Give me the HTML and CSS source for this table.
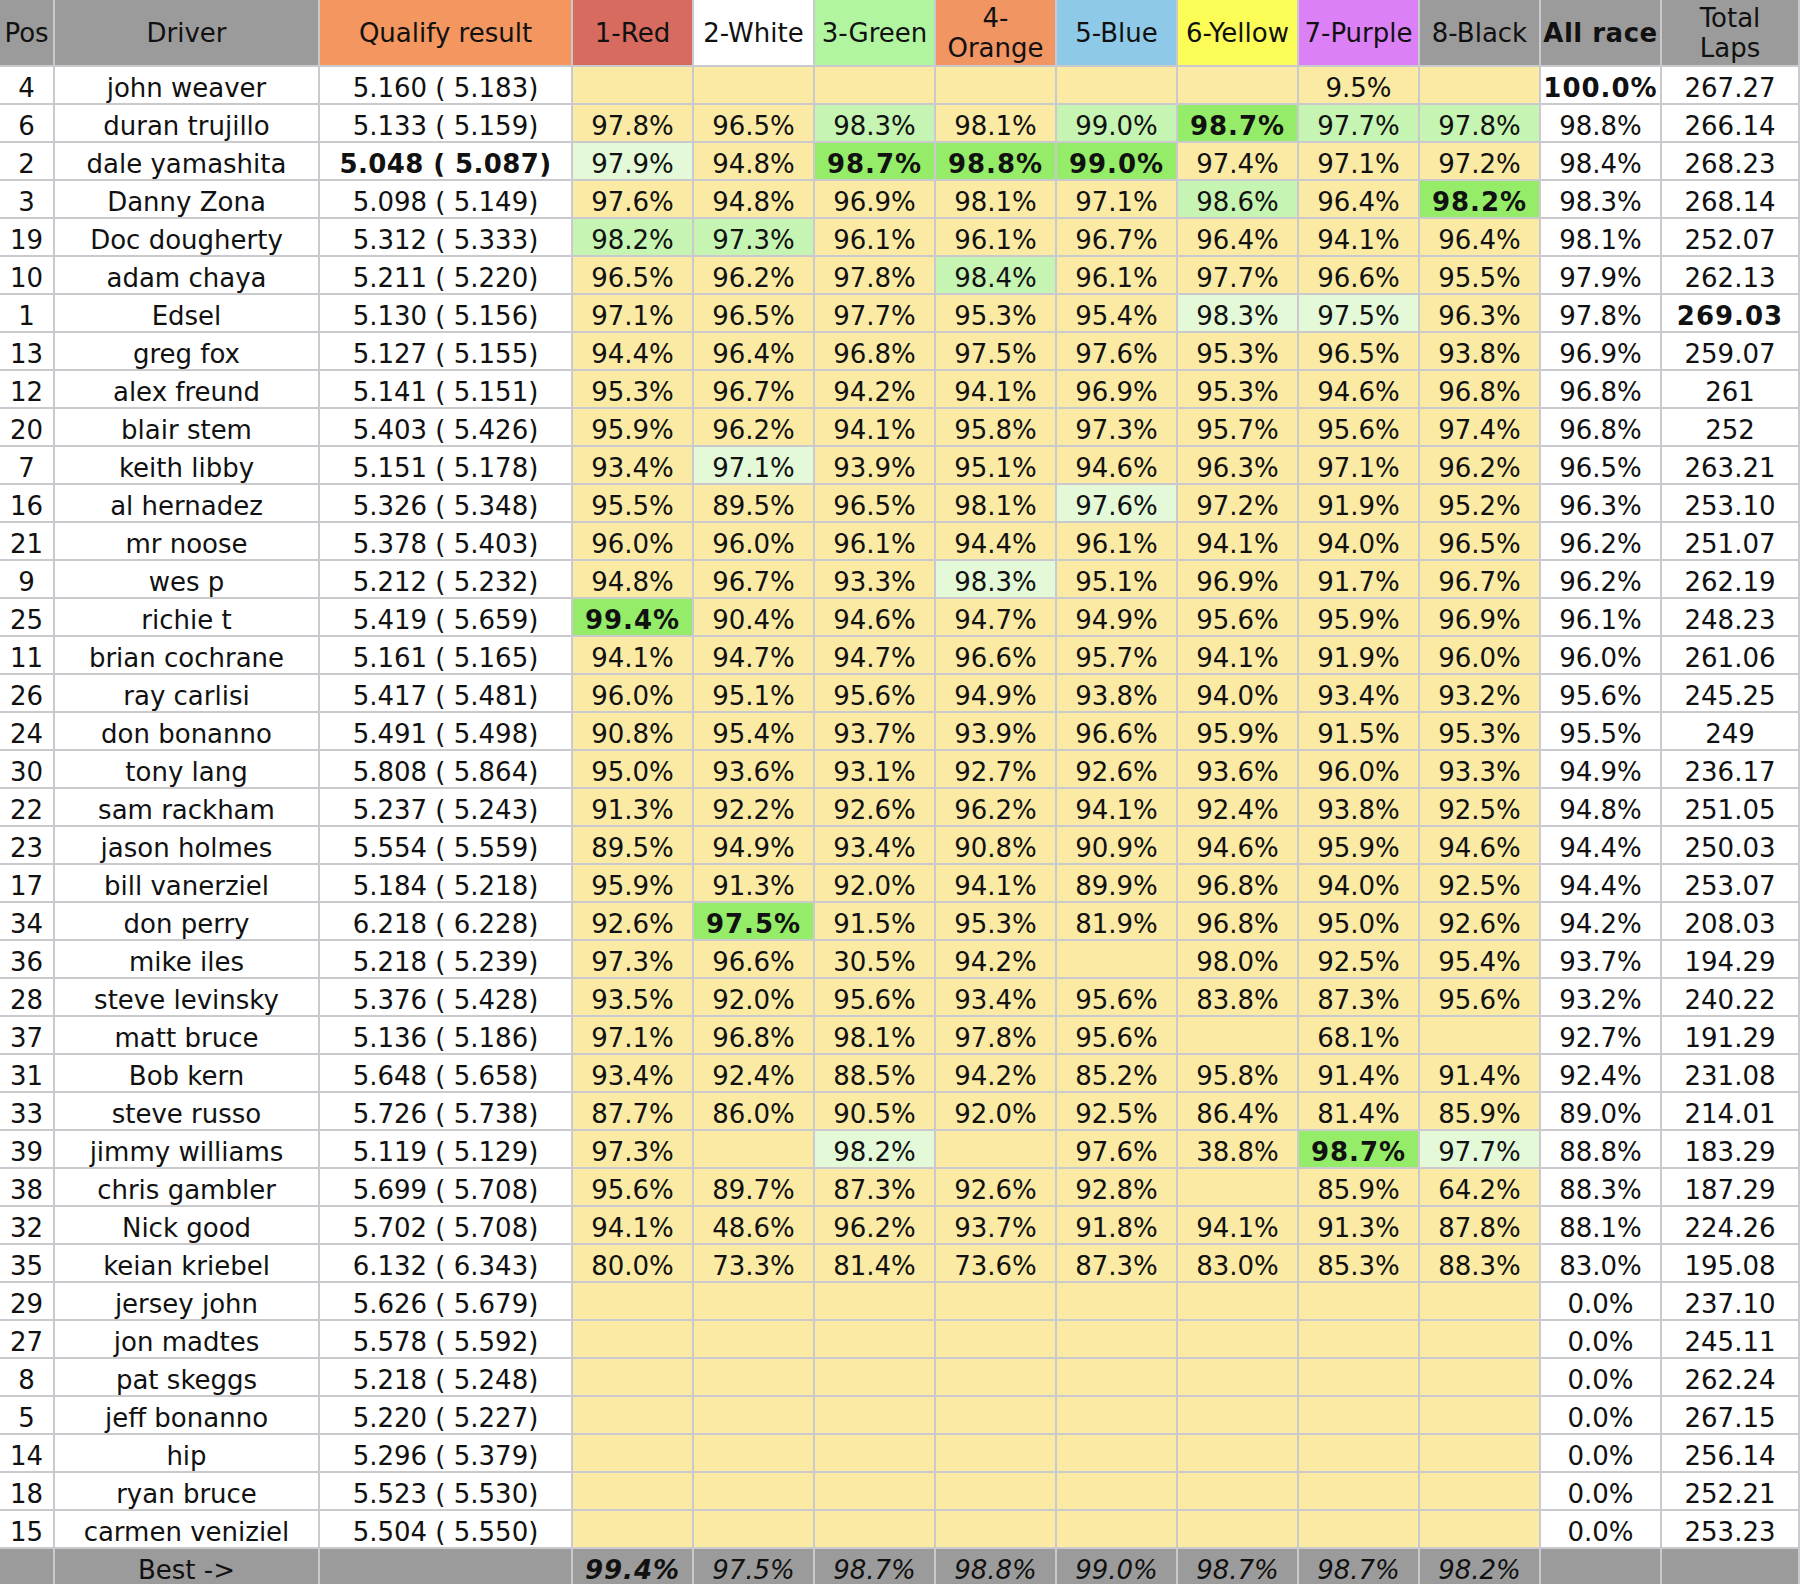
FILE: index.html
```html
<!DOCTYPE html>
<html lang="en">
<head>
<meta charset="utf-8">
<title>Race results</title>
<link rel="stylesheet" href="styles.css">
</head>
<body>
<table class="results">
<colgroup>
<col class="w-pos"><col class="w-driver"><col class="w-qual">
<col class="w-lane"><col class="w-lane"><col class="w-lane"><col class="w-lane">
<col class="w-lane"><col class="w-lane"><col class="w-lane"><col class="w-lane">
<col class="w-lane"><col class="w-total">
</colgroup>
<thead>
<tr>
<th class="h-grey">Pos</th>
<th class="h-grey">Driver</th>
<th class="h-qual">Qualify result</th>
<th class="h-red">1-Red</th>
<th class="h-white">2-White</th>
<th class="h-green">3-Green</th>
<th class="h-orange">4-<br>Orange</th>
<th class="h-blue">5-Blue</th>
<th class="h-yellow">6-Yellow</th>
<th class="h-purple">7-Purple</th>
<th class="h-grey">8-Black</th>
<th class="h-grey bold">All race</th>
<th class="h-grey">Total<br>Laps</th>
</tr>
</thead>
<tbody>
<tr><td>4</td><td>john weaver</td><td>5.160 ( 5.183)</td><td class="c"></td><td class="c"></td><td class="c"></td><td class="c"></td><td class="c"></td><td class="c"></td><td class="c">9.5%</td><td class="c"></td><td class="bold">100.0%</td><td>267.27</td></tr>
<tr><td>6</td><td>duran trujillo</td><td>5.133 ( 5.159)</td><td class="c">97.8%</td><td class="c">96.5%</td><td class="c g2">98.3%</td><td class="c">98.1%</td><td class="c g2">99.0%</td><td class="c g1">98.7%</td><td class="c g2">97.7%</td><td class="c g2">97.8%</td><td>98.8%</td><td>266.14</td></tr>
<tr><td>2</td><td>dale yamashita</td><td class="bold tight">5.048 ( 5.087)</td><td class="c g3">97.9%</td><td class="c">94.8%</td><td class="c g1">98.7%</td><td class="c g1">98.8%</td><td class="c g1">99.0%</td><td class="c">97.4%</td><td class="c">97.1%</td><td class="c">97.2%</td><td>98.4%</td><td>268.23</td></tr>
<tr><td>3</td><td>Danny Zona</td><td>5.098 ( 5.149)</td><td class="c">97.6%</td><td class="c">94.8%</td><td class="c">96.9%</td><td class="c">98.1%</td><td class="c">97.1%</td><td class="c g2">98.6%</td><td class="c">96.4%</td><td class="c g1">98.2%</td><td>98.3%</td><td>268.14</td></tr>
<tr><td>19</td><td>Doc dougherty</td><td>5.312 ( 5.333)</td><td class="c g2">98.2%</td><td class="c g2">97.3%</td><td class="c">96.1%</td><td class="c">96.1%</td><td class="c">96.7%</td><td class="c">96.4%</td><td class="c">94.1%</td><td class="c">96.4%</td><td>98.1%</td><td>252.07</td></tr>
<tr><td>10</td><td>adam chaya</td><td>5.211 ( 5.220)</td><td class="c">96.5%</td><td class="c">96.2%</td><td class="c">97.8%</td><td class="c g2">98.4%</td><td class="c">96.1%</td><td class="c">97.7%</td><td class="c">96.6%</td><td class="c">95.5%</td><td>97.9%</td><td>262.13</td></tr>
<tr><td>1</td><td>Edsel</td><td>5.130 ( 5.156)</td><td class="c">97.1%</td><td class="c">96.5%</td><td class="c">97.7%</td><td class="c">95.3%</td><td class="c">95.4%</td><td class="c g3">98.3%</td><td class="c g3">97.5%</td><td class="c">96.3%</td><td>97.8%</td><td class="bold">269.03</td></tr>
<tr><td>13</td><td>greg fox</td><td>5.127 ( 5.155)</td><td class="c">94.4%</td><td class="c">96.4%</td><td class="c">96.8%</td><td class="c">97.5%</td><td class="c">97.6%</td><td class="c">95.3%</td><td class="c">96.5%</td><td class="c">93.8%</td><td>96.9%</td><td>259.07</td></tr>
<tr><td>12</td><td>alex freund</td><td>5.141 ( 5.151)</td><td class="c">95.3%</td><td class="c">96.7%</td><td class="c">94.2%</td><td class="c">94.1%</td><td class="c">96.9%</td><td class="c">95.3%</td><td class="c">94.6%</td><td class="c">96.8%</td><td>96.8%</td><td>261</td></tr>
<tr><td>20</td><td>blair stem</td><td>5.403 ( 5.426)</td><td class="c">95.9%</td><td class="c">96.2%</td><td class="c">94.1%</td><td class="c">95.8%</td><td class="c">97.3%</td><td class="c">95.7%</td><td class="c">95.6%</td><td class="c">97.4%</td><td>96.8%</td><td>252</td></tr>
<tr><td>7</td><td>keith libby</td><td>5.151 ( 5.178)</td><td class="c">93.4%</td><td class="c g3">97.1%</td><td class="c">93.9%</td><td class="c">95.1%</td><td class="c">94.6%</td><td class="c">96.3%</td><td class="c">97.1%</td><td class="c">96.2%</td><td>96.5%</td><td>263.21</td></tr>
<tr><td>16</td><td>al hernadez</td><td>5.326 ( 5.348)</td><td class="c">95.5%</td><td class="c">89.5%</td><td class="c">96.5%</td><td class="c">98.1%</td><td class="c g3">97.6%</td><td class="c">97.2%</td><td class="c">91.9%</td><td class="c">95.2%</td><td>96.3%</td><td>253.10</td></tr>
<tr><td>21</td><td>mr noose</td><td>5.378 ( 5.403)</td><td class="c">96.0%</td><td class="c">96.0%</td><td class="c">96.1%</td><td class="c">94.4%</td><td class="c">96.1%</td><td class="c">94.1%</td><td class="c">94.0%</td><td class="c">96.5%</td><td>96.2%</td><td>251.07</td></tr>
<tr><td>9</td><td>wes p</td><td>5.212 ( 5.232)</td><td class="c">94.8%</td><td class="c">96.7%</td><td class="c">93.3%</td><td class="c g3">98.3%</td><td class="c">95.1%</td><td class="c">96.9%</td><td class="c">91.7%</td><td class="c">96.7%</td><td>96.2%</td><td>262.19</td></tr>
<tr><td>25</td><td>richie t</td><td>5.419 ( 5.659)</td><td class="c g1">99.4%</td><td class="c">90.4%</td><td class="c">94.6%</td><td class="c">94.7%</td><td class="c">94.9%</td><td class="c">95.6%</td><td class="c">95.9%</td><td class="c">96.9%</td><td>96.1%</td><td>248.23</td></tr>
<tr><td>11</td><td>brian cochrane</td><td>5.161 ( 5.165)</td><td class="c">94.1%</td><td class="c">94.7%</td><td class="c">94.7%</td><td class="c">96.6%</td><td class="c">95.7%</td><td class="c">94.1%</td><td class="c">91.9%</td><td class="c">96.0%</td><td>96.0%</td><td>261.06</td></tr>
<tr><td>26</td><td>ray carlisi</td><td>5.417 ( 5.481)</td><td class="c">96.0%</td><td class="c">95.1%</td><td class="c">95.6%</td><td class="c">94.9%</td><td class="c">93.8%</td><td class="c">94.0%</td><td class="c">93.4%</td><td class="c">93.2%</td><td>95.6%</td><td>245.25</td></tr>
<tr><td>24</td><td>don bonanno</td><td>5.491 ( 5.498)</td><td class="c">90.8%</td><td class="c">95.4%</td><td class="c">93.7%</td><td class="c">93.9%</td><td class="c">96.6%</td><td class="c">95.9%</td><td class="c">91.5%</td><td class="c">95.3%</td><td>95.5%</td><td>249</td></tr>
<tr><td>30</td><td>tony lang</td><td>5.808 ( 5.864)</td><td class="c">95.0%</td><td class="c">93.6%</td><td class="c">93.1%</td><td class="c">92.7%</td><td class="c">92.6%</td><td class="c">93.6%</td><td class="c">96.0%</td><td class="c">93.3%</td><td>94.9%</td><td>236.17</td></tr>
<tr><td>22</td><td>sam rackham</td><td>5.237 ( 5.243)</td><td class="c">91.3%</td><td class="c">92.2%</td><td class="c">92.6%</td><td class="c">96.2%</td><td class="c">94.1%</td><td class="c">92.4%</td><td class="c">93.8%</td><td class="c">92.5%</td><td>94.8%</td><td>251.05</td></tr>
<tr><td>23</td><td>jason holmes</td><td>5.554 ( 5.559)</td><td class="c">89.5%</td><td class="c">94.9%</td><td class="c">93.4%</td><td class="c">90.8%</td><td class="c">90.9%</td><td class="c">94.6%</td><td class="c">95.9%</td><td class="c">94.6%</td><td>94.4%</td><td>250.03</td></tr>
<tr><td>17</td><td>bill vanerziel</td><td>5.184 ( 5.218)</td><td class="c">95.9%</td><td class="c">91.3%</td><td class="c">92.0%</td><td class="c">94.1%</td><td class="c">89.9%</td><td class="c">96.8%</td><td class="c">94.0%</td><td class="c">92.5%</td><td>94.4%</td><td>253.07</td></tr>
<tr><td>34</td><td>don perry</td><td>6.218 ( 6.228)</td><td class="c">92.6%</td><td class="c g1">97.5%</td><td class="c">91.5%</td><td class="c">95.3%</td><td class="c">81.9%</td><td class="c">96.8%</td><td class="c">95.0%</td><td class="c">92.6%</td><td>94.2%</td><td>208.03</td></tr>
<tr><td>36</td><td>mike iles</td><td>5.218 ( 5.239)</td><td class="c">97.3%</td><td class="c">96.6%</td><td class="c">30.5%</td><td class="c">94.2%</td><td class="c"></td><td class="c">98.0%</td><td class="c">92.5%</td><td class="c">95.4%</td><td>93.7%</td><td>194.29</td></tr>
<tr><td>28</td><td>steve levinsky</td><td>5.376 ( 5.428)</td><td class="c">93.5%</td><td class="c">92.0%</td><td class="c">95.6%</td><td class="c">93.4%</td><td class="c">95.6%</td><td class="c">83.8%</td><td class="c">87.3%</td><td class="c">95.6%</td><td>93.2%</td><td>240.22</td></tr>
<tr><td>37</td><td>matt bruce</td><td>5.136 ( 5.186)</td><td class="c">97.1%</td><td class="c">96.8%</td><td class="c">98.1%</td><td class="c">97.8%</td><td class="c">95.6%</td><td class="c"></td><td class="c">68.1%</td><td class="c"></td><td>92.7%</td><td>191.29</td></tr>
<tr><td>31</td><td>Bob kern</td><td>5.648 ( 5.658)</td><td class="c">93.4%</td><td class="c">92.4%</td><td class="c">88.5%</td><td class="c">94.2%</td><td class="c">85.2%</td><td class="c">95.8%</td><td class="c">91.4%</td><td class="c">91.4%</td><td>92.4%</td><td>231.08</td></tr>
<tr><td>33</td><td>steve russo</td><td>5.726 ( 5.738)</td><td class="c">87.7%</td><td class="c">86.0%</td><td class="c">90.5%</td><td class="c">92.0%</td><td class="c">92.5%</td><td class="c">86.4%</td><td class="c">81.4%</td><td class="c">85.9%</td><td>89.0%</td><td>214.01</td></tr>
<tr><td>39</td><td>jimmy williams</td><td>5.119 ( 5.129)</td><td class="c">97.3%</td><td class="c"></td><td class="c g3">98.2%</td><td class="c"></td><td class="c">97.6%</td><td class="c">38.8%</td><td class="c g1">98.7%</td><td class="c g3">97.7%</td><td>88.8%</td><td>183.29</td></tr>
<tr><td>38</td><td>chris gambler</td><td>5.699 ( 5.708)</td><td class="c">95.6%</td><td class="c">89.7%</td><td class="c">87.3%</td><td class="c">92.6%</td><td class="c">92.8%</td><td class="c"></td><td class="c">85.9%</td><td class="c">64.2%</td><td>88.3%</td><td>187.29</td></tr>
<tr><td>32</td><td>Nick good</td><td>5.702 ( 5.708)</td><td class="c">94.1%</td><td class="c">48.6%</td><td class="c">96.2%</td><td class="c">93.7%</td><td class="c">91.8%</td><td class="c">94.1%</td><td class="c">91.3%</td><td class="c">87.8%</td><td>88.1%</td><td>224.26</td></tr>
<tr><td>35</td><td>keian kriebel</td><td>6.132 ( 6.343)</td><td class="c">80.0%</td><td class="c">73.3%</td><td class="c">81.4%</td><td class="c">73.6%</td><td class="c">87.3%</td><td class="c">83.0%</td><td class="c">85.3%</td><td class="c">88.3%</td><td>83.0%</td><td>195.08</td></tr>
<tr><td>29</td><td>jersey john</td><td>5.626 ( 5.679)</td><td class="c"></td><td class="c"></td><td class="c"></td><td class="c"></td><td class="c"></td><td class="c"></td><td class="c"></td><td class="c"></td><td>0.0%</td><td>237.10</td></tr>
<tr><td>27</td><td>jon madtes</td><td>5.578 ( 5.592)</td><td class="c"></td><td class="c"></td><td class="c"></td><td class="c"></td><td class="c"></td><td class="c"></td><td class="c"></td><td class="c"></td><td>0.0%</td><td>245.11</td></tr>
<tr><td>8</td><td>pat skeggs</td><td>5.218 ( 5.248)</td><td class="c"></td><td class="c"></td><td class="c"></td><td class="c"></td><td class="c"></td><td class="c"></td><td class="c"></td><td class="c"></td><td>0.0%</td><td>262.24</td></tr>
<tr><td>5</td><td>jeff bonanno</td><td>5.220 ( 5.227)</td><td class="c"></td><td class="c"></td><td class="c"></td><td class="c"></td><td class="c"></td><td class="c"></td><td class="c"></td><td class="c"></td><td>0.0%</td><td>267.15</td></tr>
<tr><td>14</td><td>hip</td><td>5.296 ( 5.379)</td><td class="c"></td><td class="c"></td><td class="c"></td><td class="c"></td><td class="c"></td><td class="c"></td><td class="c"></td><td class="c"></td><td>0.0%</td><td>256.14</td></tr>
<tr><td>18</td><td>ryan bruce</td><td>5.523 ( 5.530)</td><td class="c"></td><td class="c"></td><td class="c"></td><td class="c"></td><td class="c"></td><td class="c"></td><td class="c"></td><td class="c"></td><td>0.0%</td><td>252.21</td></tr>
<tr><td>15</td><td>carmen veniziel</td><td>5.504 ( 5.550)</td><td class="c"></td><td class="c"></td><td class="c"></td><td class="c"></td><td class="c"></td><td class="c"></td><td class="c"></td><td class="c"></td><td>0.0%</td><td>253.23</td></tr>
</tbody>
<tfoot>
<tr><td></td><td>Best -&gt;</td><td></td><td class="best bold">99.4%</td><td class="best">97.5%</td><td class="best">98.7%</td><td class="best">98.8%</td><td class="best">99.0%</td><td class="best">98.7%</td><td class="best">98.7%</td><td class="best">98.2%</td><td></td><td></td></tr>
</tfoot>
</table>
</body>
</html>
```
FILE: styles.css
```css
html, body {
  margin: 0;
  padding: 0;
  overflow: hidden;
  background: #ffffff;
}

.results {
  table-layout: fixed;
  width: 1802px;
  margin: -2px 0 0 -2px;
  border-collapse: separate;
  border-spacing: 2px;
  background: #c9c9ce;
  font-family: "DejaVu Sans", Verdana, sans-serif;
  font-size: 26px;
  color: #111111;
}

.w-pos { width: 53px; }
.w-driver { width: 263px; }
.w-qual { width: 251px; }
.w-lane { width: 119px; }
.w-total { width: 136px; }

.results th,
.results td {
  padding: 0;
  text-align: center;
  vertical-align: middle;
  white-space: nowrap;
  overflow: hidden;
}

.results th {
  height: 65px;
  line-height: 30px;
  font-weight: normal;
}

.results td {
  height: 31px;
  padding-top: 5px;
  line-height: 30px;
  background: #ffffff;
}

.h-grey { background: #9b9b9b; }
.h-qual { background: #f3965f; }
.h-red { background: #d86b5f; }
.h-white { background: #ffffff; }
.h-green { background: #b2f5a1; }
.h-orange { background: #f19563; }
.h-blue { background: #8fc9e8; }
.h-yellow { background: #fdfd57; }
.h-purple { background: #dc80f6; }

.bold { font-weight: bold; letter-spacing: 1px; }
.results th.bold { font-weight: bold; letter-spacing: 0.5px; }
.results td.tight { letter-spacing: 0.4px; }

.results td.c { background: #faeaa3; }
.results td.g1 { background: #95ec69; font-weight: bold; letter-spacing: 1px; }
.results td.g2 { background: #c6f4b2; }
.results td.g3 { background: #e3f9d8; }

.results tfoot td {
  background: #9b9b9b;
}

.results tfoot td.best {
  font-style: italic;
}
```
